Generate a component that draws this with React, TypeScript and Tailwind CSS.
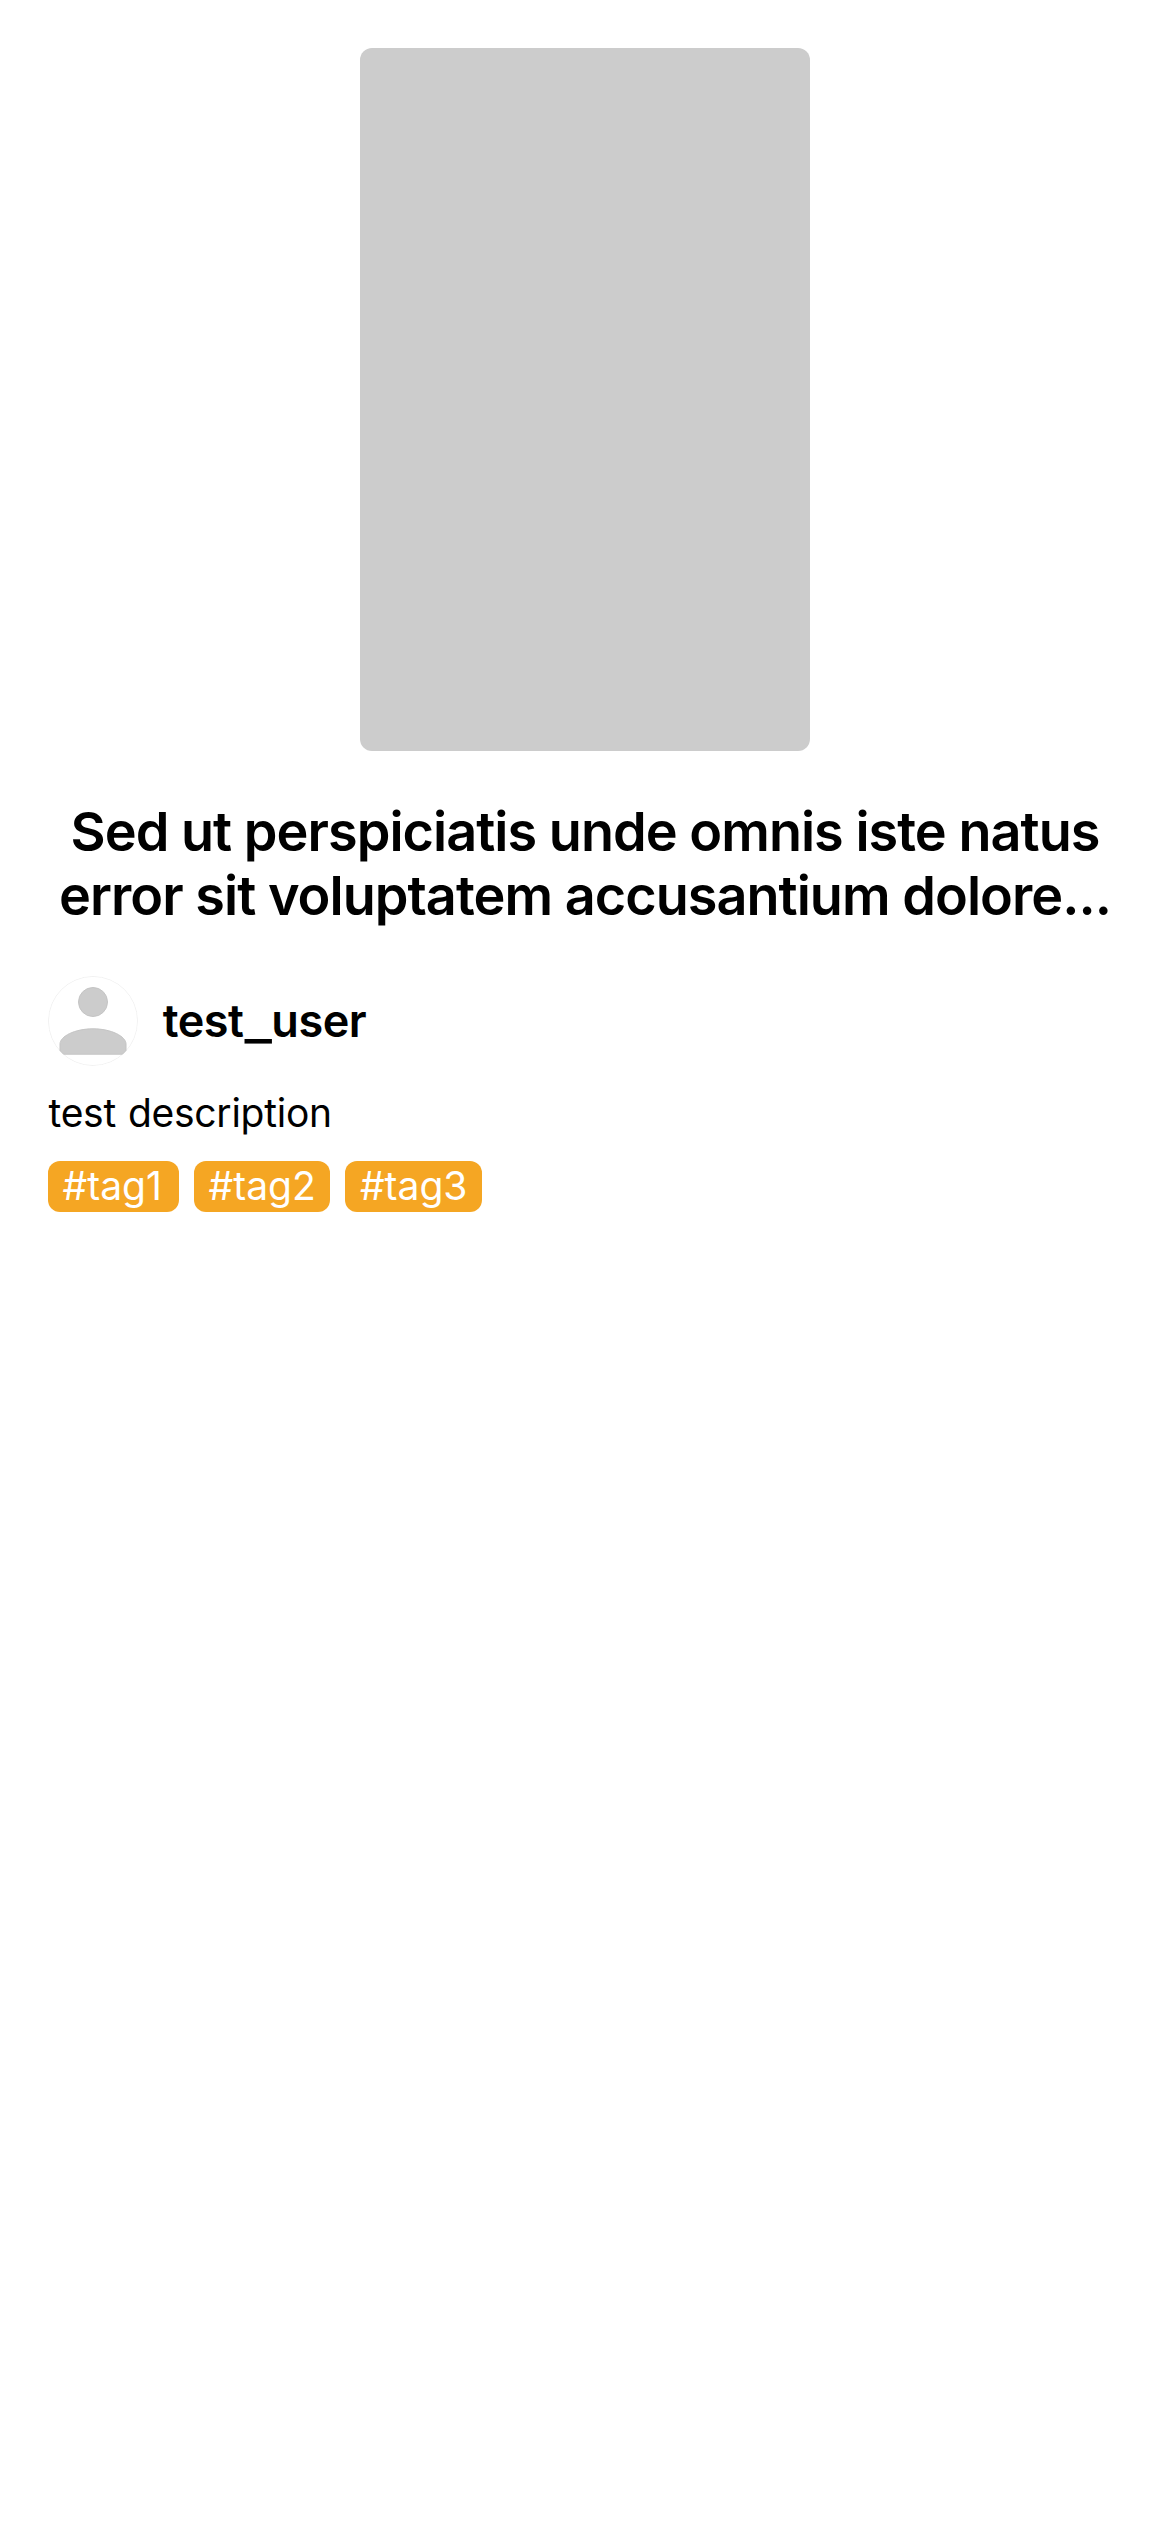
const tags = [
  { label: "#tag1", width: "w-[131px]" },
  { label: "#tag2", width: "w-[136.4px]" },
  { label: "#tag3", width: "w-[137px]" },
];

function Avatar() {
  return (
    <svg viewBox="0 0 90 90" className="size-[90px] shrink-0 rounded-full">
      <circle cx="45" cy="45" r="44.6" fill="#ffffff" stroke="#ededed" strokeWidth="0.8" />
      <g fill="#cccccc" stroke="#c4c4c4" strokeWidth="1">
        <circle cx="45" cy="26" r="14.5" />
        <path d="M12 68C12 60.5 26.5 52.8 45 52.8S78 60.5 78 68V74.5L74.5 78.2H15.5L12 74.5Z" />
      </g>
    </svg>
  );
}

export default function App() {
  return (
    <main className="flex min-h-[2532px] w-[1170px] flex-col overflow-hidden bg-white px-12 pt-12 font-['Inter',sans-serif] text-black">
      <div className="h-[703px] w-[450px] self-center rounded-xl bg-[#cccccc]" />
      <h1 className="mt-[48.5px] text-center text-[54px] leading-[64px] font-semibold tracking-[-0.97px] whitespace-nowrap">
        Sed ut perspiciatis unde omnis iste natus
        <br />
        error sit voluptatem accusantium dolore...
      </h1>
      <section className="mt-[48.5px] flex h-[90px] items-start gap-6">
        <Avatar />
        <h2 className="mt-[17px] pl-[0.7px] text-[45px] leading-[55px] font-semibold tracking-[-0.5px]">
          test
          <span className="inline-block w-[28px] origin-left translate-x-[1.5px] translate-y-[2px] scale-x-[1.3] tracking-normal">_</span>
          user
        </h2>
      </section>
      <p className="mt-[23px] pl-[0.5px] text-[39px] leading-[47px] tracking-[-0.25px] [word-spacing:1.2px]">
        test description
      </p>
      <ul className="mt-[25px] flex gap-[15px]">
        {tags.map(({ label, width }) => (
          <li
            key={label}
            className={`h-[51px] rounded-xl bg-[#f5a623] pt-px pl-[14.5px] text-[39px] leading-[47px] text-white ${width}`}
          >
            {label}
          </li>
        ))}
      </ul>
    </main>
  );
}
